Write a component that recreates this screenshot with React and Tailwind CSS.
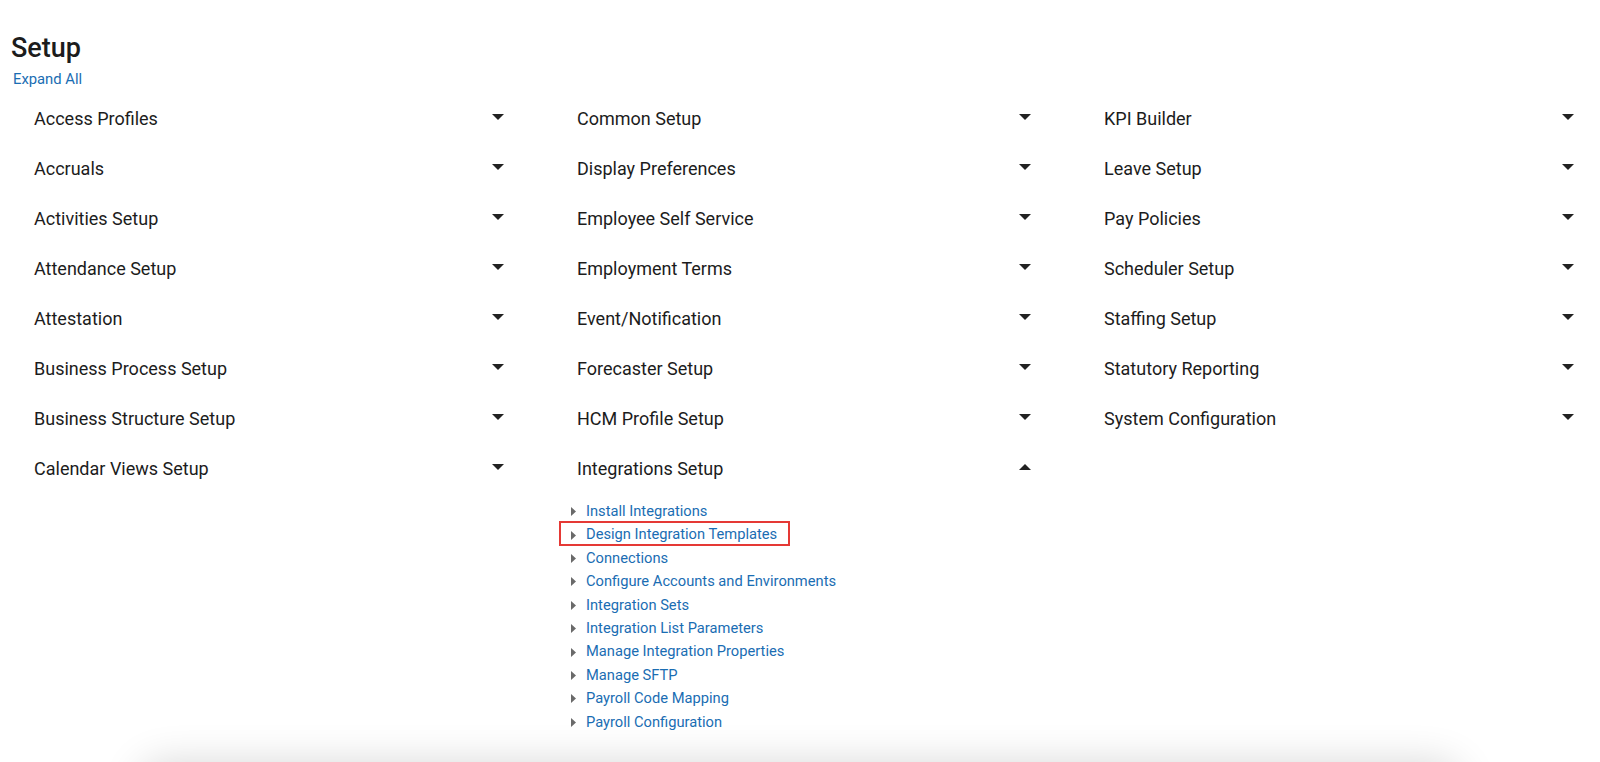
import React from "react";

const columns = [
  [
    { label: "Access Profiles" },
    { label: "Accruals" },
    { label: "Activities Setup" },
    { label: "Attendance Setup" },
    { label: "Attestation" },
    { label: "Business Process Setup" },
    { label: "Business Structure Setup" },
    { label: "Calendar Views Setup" },
  ],
  [
    { label: "Common Setup" },
    { label: "Display Preferences" },
    { label: "Employee Self Service" },
    { label: "Employment Terms" },
    { label: "Event/Notification" },
    { label: "Forecaster Setup" },
    { label: "HCM Profile Setup" },
    {
      label: "Integrations Setup",
      open: true,
      links: [
        "Install Integrations",
        "Design Integration Templates",
        "Connections",
        "Configure Accounts and Environments",
        "Integration Sets",
        "Integration List Parameters",
        "Manage Integration Properties",
        "Manage SFTP",
        "Payroll Code Mapping",
        "Payroll Configuration",
      ],
    },
  ],
  [
    { label: "KPI Builder" },
    { label: "Leave Setup" },
    { label: "Pay Policies" },
    { label: "Scheduler Setup" },
    { label: "Staffing Setup" },
    { label: "Statutory Reporting" },
    { label: "System Configuration" },
  ],
];

function Caret({ up }) {
  return (
    <svg width="12" height="6" viewBox="0 0 12 6" className="mt-[20px] shrink-0">
      {up ? <path d="M0 6 L6 0 L12 6 Z" fill="#222" /> : <path d="M0 0 L12 0 L6 6 Z" fill="#222" />}
    </svg>
  );
}

function Section({ section }) {
  return (
    <div>
      <div className="flex justify-between items-start h-[50px] cursor-pointer">
        <span className="text-[18px] leading-[50px] text-[#1c1c1c]">{section.label}</span>
        <Caret up={section.open} />
      </div>
      {section.open && (
        <ul className="mt-[6px] ml-[-6px]">
          {section.links.map((link, i) => (
            <li key={link} className="relative flex items-center gap-[10px] h-[23.4px]">
              <svg width="5" height="9" viewBox="0 0 5 9" className="shrink-0">
                <path d="M0 0 L5 4.5 L0 9 Z" fill="#6a6a6a" />
              </svg>
              <a className="text-[14.7px] leading-[23.4px] text-[#1a6db3] cursor-pointer">{link}</a>
              {i === 1 && (
                <div className="absolute left-[-12px] top-[-2px] w-[231px] h-[25px] border-2 border-[#e53935]" />
              )}
            </li>
          ))}
        </ul>
      )}
    </div>
  );
}

export default function App() {
  return (
    <div className="h-[762px] overflow-hidden bg-white font-[Roboto,sans-serif]">
      <div className="pt-[32px] pl-[11px]">
        <h1 className="text-[27px] leading-[32px] font-medium text-[#1c1c1c]">Setup</h1>
        <a className="block mt-[5px] ml-[2px] text-[14.8px] leading-[20px] text-[#1a6db3] cursor-pointer">
          Expand All
        </a>
      </div>

      <div className="grid grid-cols-[470px_454px_470px] gap-x-[73px] pl-[34px] mt-[5px]">
        {columns.map((col, ci) => (
          <div key={ci}>
            {col.map((section) => (
              <Section key={section.label} section={section} />
            ))}
          </div>
        ))}
      </div>

      {/* next panel peeking in below the fold */}
      <div className="mx-[140px] mt-[29px] h-[200px] rounded-[24px] bg-white shadow-[0_0_40px_rgba(0,0,0,0.16)]" />
    </div>
  );
}
